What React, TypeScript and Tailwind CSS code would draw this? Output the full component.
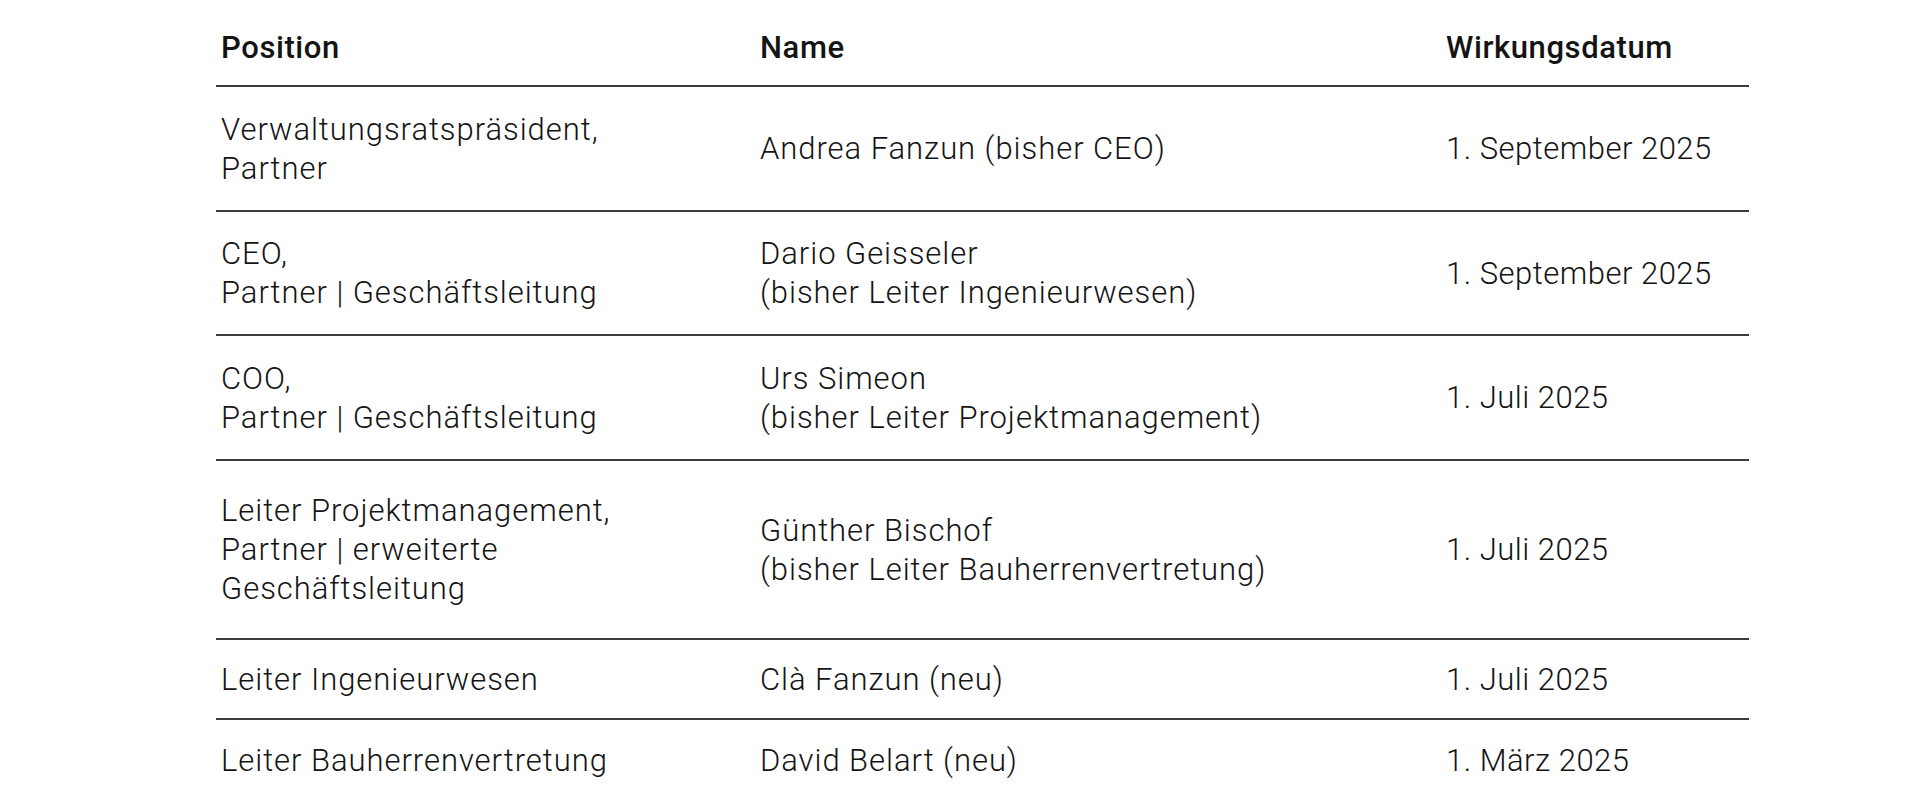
const rows = [
    {
        position: ['Verwaltungsratspräsident,', 'Partner'],
        name: ['Andrea Fanzun (bisher CEO)'],
        date: '1. September 2025',
        height: 'h-[125px]',
    },
    {
        position: ['CEO,', 'Partner | Geschäftsleitung'],
        name: ['Dario Geisseler', '(bisher Leiter Ingenieurwesen)'],
        date: '1. September 2025',
        height: 'h-[124px]',
    },
    {
        position: ['COO,', 'Partner | Geschäftsleitung'],
        name: ['Urs Simeon', '(bisher Leiter Projektmanagement)'],
        date: '1. Juli 2025',
        height: 'h-[125px]',
    },
    {
        position: ['Leiter Projektmanagement,', 'Partner | erweiterte', 'Geschäftsleitung'],
        name: ['Günther Bischof', '(bisher Leiter Bauherrenvertretung)'],
        date: '1. Juli 2025',
        height: 'h-[179px]',
    },
    {
        position: ['Leiter Ingenieurwesen'],
        name: ['Clà Fanzun (neu)'],
        date: '1. Juli 2025',
        height: 'h-[80px]',
    },
    {
        position: ['Leiter Bauherrenvertretung'],
        name: ['David Belart (neu)'],
        date: '1. März 2025',
        height: 'h-[80px]',
    },
];

function Cell({ lines }: { lines: string[] }) {
    return (
        <div className="flex flex-col justify-center px-[5px]">
            {lines.map((l) => (
                <p key={l}>{l}</p>
            ))}
        </div>
    );
}

export default function App() {
    return (
        <div className="min-h-[804px] bg-white pl-[216px] text-[#141414] font-['Roboto','Liberation_Sans',sans-serif]">
            <div className="w-[1533px]">
                <div className="grid grid-cols-[539px_686px_308px] h-[87px] items-center pt-[10px] border-b-2 border-[#3c3c3c] text-[31px] leading-[39px] font-medium tracking-[0.6px]">
                    <div className="px-[5px]">Position</div>
                    <div className="px-[5px]">Name</div>
                    <div className="px-[5px]">Wirkungsdatum</div>
                </div>
                {rows.map((r, i) => (
                    <div
                        key={i}
                        className={`grid grid-cols-[539px_686px_308px] items-center text-[31px] leading-[39px] font-light tracking-[0.95px] ${r.height} ${i < rows.length - 1 ? 'border-b-2 border-[#3c3c3c]' : ''}`}
                    >
                        <Cell lines={r.position} />
                        <Cell lines={r.name} />
                        <div className="px-[5px] tracking-[0.5px]">{r.date}</div>
                    </div>
                ))}
            </div>
        </div>
    );
}
